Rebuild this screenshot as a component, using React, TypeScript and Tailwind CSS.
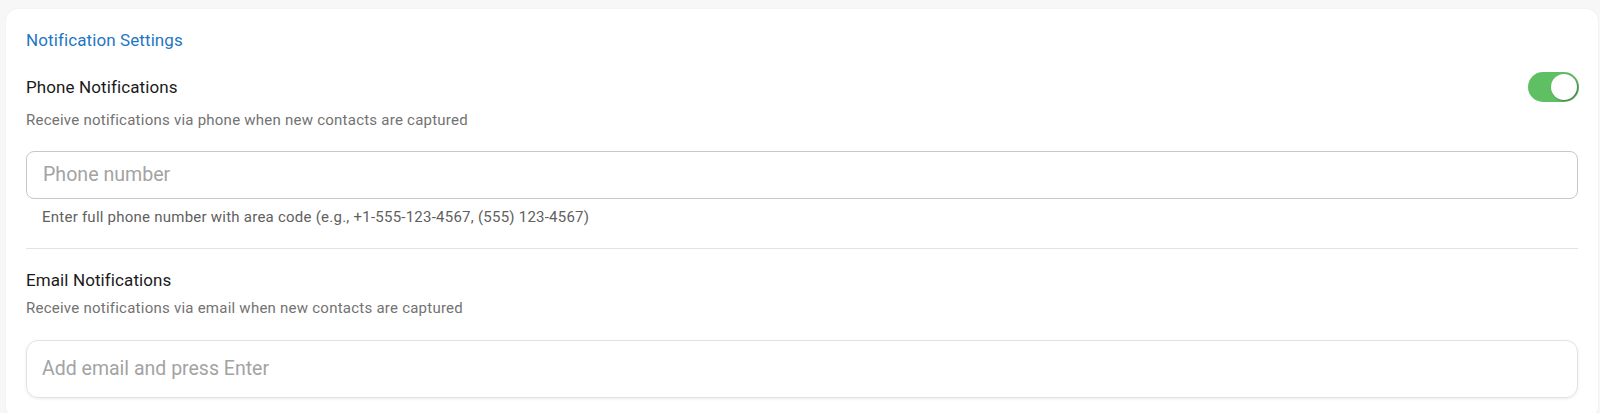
import React from "react";

export default function App() {
  return (
    <div className="min-h-[413px] w-full bg-[#f7f7f7] pt-[9px] pl-[6px] pr-[2px] font-['Roboto','Liberation_Sans',sans-serif]">
      <div className="rounded-[12px] bg-white px-[20px] pt-[19px] pb-[20px] shadow-[0_0_2px_rgba(0,0,0,0.06)]">
        <h2 className="text-[17px] leading-[24px] tracking-[0.1px] text-[#1f76c4]">Notification Settings</h2>

        <div className="mt-[20px] flex items-center justify-between">
          <div className="text-[17px] leading-[24px] tracking-[0.1px] text-[#1a1a1a]">Phone Notifications</div>
          <div className="mr-[-1px] flex h-[30px] w-[51px] items-center justify-end rounded-full bg-[#5fbf63] pr-[2px]">
            <div className="h-[26px] w-[26px] rounded-full bg-white shadow-[1px_1px_2px_rgba(0,0,0,0.35)]" />
          </div>
        </div>
        <p className="mt-[8px] text-[15px] leading-[20px] tracking-[0.24px] text-[#727272]">
          Receive notifications via phone when new contacts are captured
        </p>

        <div className="mt-[21px] flex h-[48px] items-center rounded-[8px] border border-[#c8c8c8] px-[16px]">
          <span className="text-[19.6px] text-[#a3a3a3]">Phone number</span>
        </div>
        <p className="mt-[8px] ml-[16px] text-[15px] leading-[20px] tracking-[0.24px] text-[#5f5f5f]">
          Enter full phone number with area code (e.g., +1-555-123-4567, (555) 123-4567)
        </p>

        <div className="mt-[21px] h-px bg-[#e3e3e3]" />

        <div className="mt-[19px] text-[17px] leading-[24px] tracking-[0.1px] text-[#1a1a1a]">Email Notifications</div>
        <p className="mt-[6px] text-[15px] leading-[20px] tracking-[0.24px] text-[#727272]">
          Receive notifications via email when new contacts are captured
        </p>

        <div className="mt-[22px] flex h-[58px] items-center rounded-[12px] border border-[#e2e2e2] px-[15px] shadow-[0_1px_3px_rgba(0,0,0,0.08)]">
          <span className="text-[19.5px] text-[#a3a3a3]">Add email and press Enter</span>
        </div>
      </div>
    </div>
  );
}
